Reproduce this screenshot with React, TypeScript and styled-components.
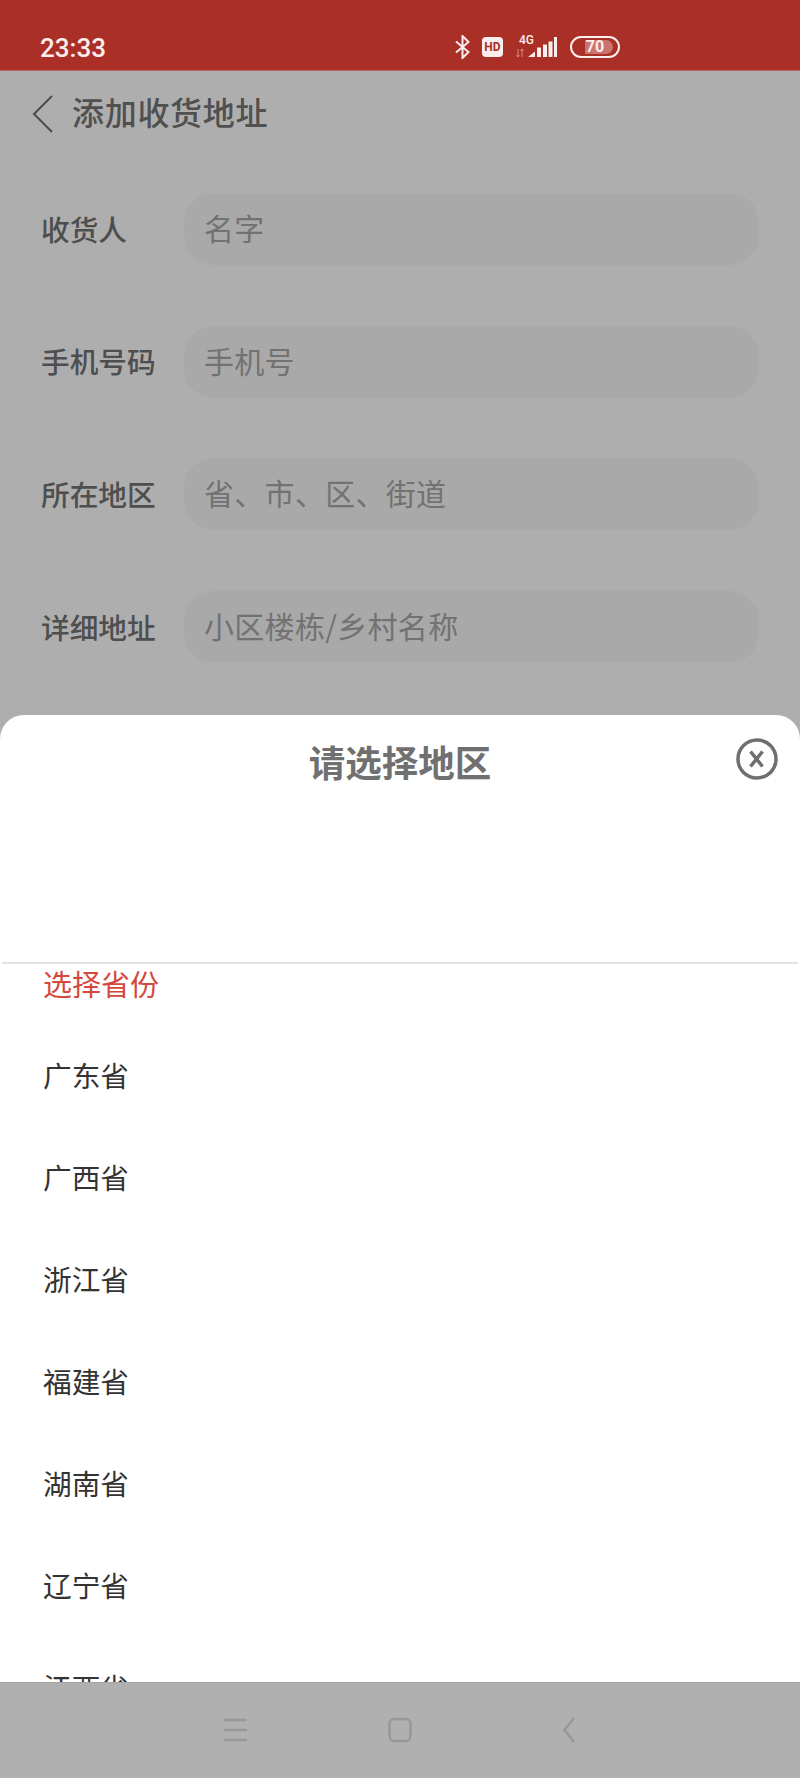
import React from 'react';
import styled, { createGlobalStyle } from 'styled-components';

const GlobalStyle = createGlobalStyle`
  html, body {
    margin: 0;
    padding: 0;
    background: #aeaeae;
  }
  * {
    box-sizing: border-box;
  }
`;

const cjk = `"Noto Sans CJK SC", "Noto Sans", sans-serif`;

const Screen = styled.div`
  position: relative;
  width: 800px;
  height: 1778px;
  overflow: hidden;
  display: flex;
  flex-direction: column;
  background: #aeaeae;
  font-family: ${cjk};
`;

const StatusBar = styled.div`
  height: 71px;
  flex: none;
  display: flex;
  align-items: center;
  padding: 24px 0 0 40px;
  background: #a92f27;
  border-bottom: 1px solid #b9625c;
`;

const Clock = styled.span`
  width: 415px;
  padding-top: 2px;
  font-family: Roboto, sans-serif;
  font-size: 26px;
  font-weight: 500;
  color: #fbeeed;
`;

const StatusIcons = styled.div`
  display: flex;
  align-items: center;
`;

const Hd = styled.span`
  width: 21px;
  height: 20px;
  margin: 0 13px 0 12px;
  border-radius: 4px;
  background: #fbeeed;
  color: #a92f27;
  font-family: Roboto, sans-serif;
  font-size: 12px;
  font-weight: 700;
  line-height: 20px;
  text-align: center;
`;

const Network = styled.div`
  width: 41px;
  height: 22px;
  margin-right: 13px;
  position: relative;
`;

const FourG = styled.span`
  position: absolute;
  left: 3px;
  top: 0;
  font-family: Roboto, sans-serif;
  font-size: 12px;
  font-weight: 500;
  line-height: 9px;
  color: #fbeeed;
`;

const Battery = styled.div`
  position: relative;
  width: 50px;
  height: 22px;
  border: 2px solid #fbeeed;
  border-radius: 11px;
  overflow: hidden;
  display: flex;
  justify-content: center;
`;

const BatteryFill = styled.div`
  position: absolute;
  left: 13px;
  top: 2px;
  bottom: 2px;
  width: 28px;
  border-radius: 0 7px 7px 0;
  background: #cb736d;
`;

const BatteryLabel = styled.span`
  position: relative;
  font-family: Roboto, sans-serif;
  font-size: 16px;
  font-weight: 700;
  line-height: 18px;
  color: #fbeeed;
`;

const Page = styled.div`
  flex: 1;
  min-height: 0;
`;

const TitleBar = styled.div`
  height: 86px;
  display: flex;
  align-items: center;
  padding-left: 31px;
`;

const BackIcon = styled.svg`
  width: 24px;
  height: 38px;
  margin-right: 17px;
`;

const PageTitle = styled.h1`
  margin: 0 0 6px;
  font-size: 32px;
  font-weight: 500;
  letter-spacing: 0.7px;
  line-height: 40px;
  color: #505050;
`;

const Form = styled.div`
  display: flex;
  flex-direction: column;
  gap: 60.7px;
  padding: 36px 41px 0 41px;
`;

const FormRow = styled.div`
  display: flex;
  align-items: center;
  height: 72px;
`;

const FieldLabel = styled.label`
  width: 143px;
  flex: none;
  padding-bottom: 2px;
  font-size: 28.7px;
  font-weight: 500;
  color: #4e4e4e;
`;

const FieldInput = styled.div`
  flex: 1;
  height: 72px;
  padding-left: 20px;
  border-radius: 30px;
  background: #a9a9a9;
  font-size: 30px;
  letter-spacing: 0.3px;
  line-height: 68px;
  color: #727272;
`;

const Sheet = styled.div`
  position: absolute;
  left: 0;
  right: 0;
  top: 715px;
  bottom: 96px;
  overflow: hidden;
  background: #fff;
  border-radius: 24px 24px 0 0;
`;

const SheetHeader = styled.div`
  position: relative;
  height: 249px;
  margin: 0 2px;
  border-bottom: 2px solid #e2e2e2;
`;

const SheetTitle = styled.h2`
  margin: 0;
  padding-top: 22px;
  font-size: 36.5px;
  font-weight: 700;
  line-height: 50px;
  text-align: center;
  color: #707070;
`;

const CloseButton = styled.svg`
  position: absolute;
  right: 20px;
  top: 23px;
  width: 42px;
  height: 42px;
`;

const Prompt = styled.div`
  padding-left: 43px;
  font-size: 29px;
  line-height: 38px;
  color: #d4483d;
`;

const ProvinceList = styled.div`
  padding: 21px 0 0 43px;
`;

const Province = styled.div`
  height: 102px;
  display: flex;
  align-items: center;
  font-size: 28.7px;
  color: #333;
`;

const NavBar = styled.div`
  height: 96px;
  flex: none;
  display: flex;
  justify-content: center;
  align-items: center;
  padding-bottom: 2px;
  background: #b0b0b0;
  border-top: 1px solid #a4a4a4;
`;

const NavSlot = styled.div`
  width: 166px;
  display: flex;
  justify-content: center;
`;

const NavIcon = styled.svg`
  width: 26px;
  height: 26px;
`;

const provinces = ['广东省', '广西省', '浙江省', '福建省', '湖南省', '辽宁省', '江西省'];

const fields = [
  { label: '收货人', hint: '名字' },
  { label: '手机号码', hint: '手机号' },
  { label: '所在地区', hint: '省、市、区、街道' },
  { label: '详细地址', hint: '小区楼栋/乡村名称' },
];

const App = () => {
  return (
    <Screen>
      <GlobalStyle />
      <StatusBar>
        <Clock>23:33</Clock>
        <StatusIcons>
          <svg width="15" height="24" viewBox="0 0 15 24" fill="none" stroke="#fbeeed" strokeWidth="2">
            <path d="M1 6.5 13.5 17 7.5 23V1l6 6L1 17.5" />
          </svg>
          <Hd>HD</Hd>
          <Network>
            <FourG>4G</FourG>
            <svg width="41" height="22" viewBox="0 0 41 22">
              <path d="M2 13v8M0.5 19 2 21l1.500-2M6 21v-8M4.500 15 6 13l1.500 2" stroke="#d98a84" strokeWidth="1" fill="none" />
              <path
                d="M12 21 19 15.500V21zM21 21V11.500h4V21zM27 21V8.500h4V21zM32.500 21V5.500h4V21zM38 21V1h3v20z"
                fill="#fbeeed"
              />
            </svg>
          </Network>
          <Battery>
            <BatteryFill />
            <BatteryLabel>70</BatteryLabel>
          </Battery>
        </StatusIcons>
      </StatusBar>

      <Page>
        <TitleBar>
          <BackIcon viewBox="0 0 24 38" fill="none" stroke="#4c4c4c" strokeWidth="2">
            <path d="M21 1 3 19l18 18" />
          </BackIcon>
          <PageTitle>添加收货地址</PageTitle>
        </TitleBar>
        <Form>
          {fields.map((field) => (
            <FormRow key={field.label}>
              <FieldLabel>{field.label}</FieldLabel>
              <FieldInput>{field.hint}</FieldInput>
            </FormRow>
          ))}
        </Form>
      </Page>

      <Sheet>
        <SheetHeader>
          <SheetTitle>请选择地区</SheetTitle>
          <CloseButton viewBox="0 0 42 42" fill="none" stroke="#6f6f6f" strokeWidth="3.500">
            <circle cx="21" cy="21" r="19" />
            <path d="M14.500 13.500l12 15M26.500 13.500l-12 15" />
          </CloseButton>
        </SheetHeader>
        <Prompt>选择省份</Prompt>
        <ProvinceList>
          {provinces.map((name) => (
            <Province key={name}>{name}</Province>
          ))}
        </ProvinceList>
      </Sheet>

      <NavBar>
        <NavSlot>
          <NavIcon viewBox="0 0 26 26" fill="none" stroke="#989898" strokeWidth="2.500">
            <path d="M3 3h23M3 13h23M3 23h23" />
          </NavIcon>
        </NavSlot>
        <NavSlot>
          <NavIcon viewBox="0 0 26 26" fill="none" stroke="#989898" strokeWidth="2.500">
            <rect x="2.500" y="2" width="21" height="22" rx="5" />
          </NavIcon>
        </NavSlot>
        <NavSlot>
          <NavIcon viewBox="0 0 26 26" fill="none" stroke="#989898" strokeWidth="2.500">
            <path d="M21 1 11.500 13 21 25" />
          </NavIcon>
        </NavSlot>
      </NavBar>
    </Screen>
  );
};

export default App;
